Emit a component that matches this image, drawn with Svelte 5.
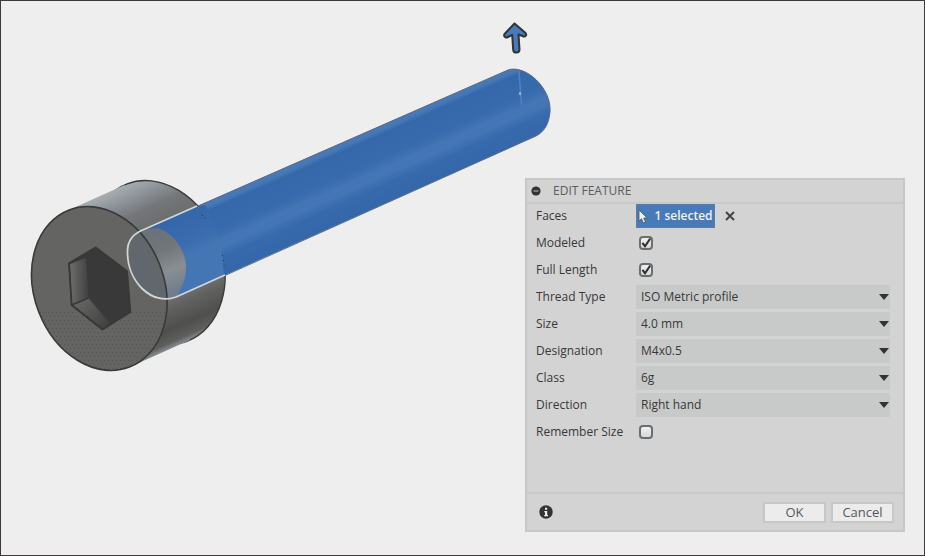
<script>
  let modeled = $state(true);
  let fullLength = $state(true);
  let rememberSize = $state(false);
  let facesSelected = $state(1);

  const selects = [
    { id: 'thread-type', label: 'Thread Type', options: ['ISO Metric profile'] },
    { id: 'size', label: 'Size', options: ['4.0 mm'] },
    { id: 'designation', label: 'Designation', options: ['M4x0.5'] },
    { id: 'class', label: 'Class', options: ['6g'] },
    { id: 'direction', label: 'Direction', options: ['Right hand'] }
  ];
</script>

{#snippet tick()}
  <svg class="tick" viewBox="0 0 14 14" aria-hidden="true">
    <path d="M3.4 6.8 6 10.2 11.2 2.6" fill="none" stroke="#303030" stroke-width="2" />
  </svg>
{/snippet}

<main class="viewport">
  <svg class="model" width="600" height="400" viewBox="0 0 600 400" role="img" aria-label="Socket head screw with one selected face">
    <defs>
      <linearGradient id="side" gradientUnits="userSpaceOnUse" x1="95" y1="198" x2="164" y2="351">
        <stop offset="0" stop-color="#a8adb2" />
        <stop offset=".1" stop-color="#8b9096" />
        <stop offset=".19" stop-color="#737577" />
        <stop offset=".32" stop-color="#6b6c6b" />
        <stop offset=".6" stop-color="#707274" />
        <stop offset=".7" stop-color="#74777a" />
        <stop offset=".78" stop-color="#626261" />
        <stop offset=".9" stop-color="#4f4f4e" />
        <stop offset=".97" stop-color="#5e5e5d" />
        <stop offset="1" stop-color="#85898d" />
      </linearGradient>
      <linearGradient id="shaft" gradientUnits="userSpaceOnUse" x1="145" y1="229" x2="175" y2="297">
        <stop offset="0" stop-color="#4a7ab6" />
        <stop offset=".07" stop-color="#4677b5" />
        <stop offset=".12" stop-color="#3568ab" />
        <stop offset=".42" stop-color="#386bad" />
        <stop offset=".55" stop-color="#4475b4" />
        <stop offset=".64" stop-color="#4475b4" />
        <stop offset=".76" stop-color="#376aad" />
        <stop offset="1" stop-color="#3467aa" />
      </linearGradient>
      <linearGradient id="root" gradientUnits="userSpaceOnUse" x1="180" y1="220" x2="206" y2="280">
        <stop offset="0" stop-color="#3568ab" />
        <stop offset=".35" stop-color="#3a6cae" />
        <stop offset=".55" stop-color="#4576b4" />
        <stop offset="1" stop-color="#4475b4" />
      </linearGradient>
      <linearGradient id="core" gradientUnits="userSpaceOnUse" x1="150" y1="225" x2="178" y2="290">
        <stop offset="0" stop-color="#69717a" />
        <stop offset=".4" stop-color="#72767a" />
        <stop offset=".7" stop-color="#898e93" />
        <stop offset="1" stop-color="#727d8a" />
      </linearGradient>
      <linearGradient id="wallLeft">
        <stop offset="0" stop-color="#6c6c6b" />
        <stop offset="1" stop-color="#414141" />
      </linearGradient>
      <linearGradient id="wallBottom" x1="0" y1="0" x2="1" y2=".6">
        <stop offset="0" stop-color="#6c6c6b" />
        <stop offset="1" stop-color="#444444" />
      </linearGradient>
      <pattern id="grain" width="4" height="4" patternUnits="userSpaceOnUse">
        <path d="M0 0h1v1H0zM2 2h1v1H2z" fill="#3f6fae" />
      </pattern>
      <pattern id="shade" width="4" height="8" patternUnits="userSpaceOnUse">
        <path d="M0 0h1v1H0zM2 4h1v1H2z" fill="#3b3b3b" />
      </pattern>
      <clipPath id="cap"><ellipse cx="99.3" cy="288.5" rx="84.2" ry="64.9" transform="rotate(69 99.3 288.5)" /></clipPath>
      <clipPath id="back"><ellipse cx="157.3" cy="262.5" rx="84.2" ry="64.9" transform="rotate(69 157.3 262.5)" /></clipPath>
      <clipPath id="rod"><path d="M145 229 508 70C525 64 552 88 550 112 549 124 544 132 536 136L176 297C152 306 127 282 127.500 251 127.500 240 134 233 145 229Z" /></clipPath>
    </defs>

    <path d="M80 170H240V350H80Z" fill="url(#side)" clip-path="url(#back)" />
    <ellipse cx="157.3" cy="262.5" rx="84.2" ry="64.9" transform="rotate(69 157.3 262.5)" fill="none" stroke="#393939" stroke-width="1.4" />
    <path d="M66.600 210.900 124.600 184.900 190 340 132 366.100Z" fill="url(#side)" />
    <ellipse cx="99.3" cy="288.5" rx="84.2" ry="64.9" transform="rotate(69 99.3 288.5)" fill="#646462" />
    <path d="M30 312H170V375H30Z" fill="url(#shade)" clip-path="url(#cap)" opacity=".4" />

    <g stroke="#383838" stroke-linejoin="round">
      <path d="M96 247.300 127.300 271 130.700 312.300 102.700 329.700 71.700 305 69 263.300Z" fill="#393939" stroke-width="1.2" />
      <path d="M70 264 86 258 88.500 298 71.700 305Z" fill="url(#wallLeft)" stroke="none" />
      <path d="M72 305 88.500 298 109.500 323 102.700 328.500Z" fill="url(#wallBottom)" stroke="none" />
      <path d="M96 247.300 69 263.300 71.700 305 102.700 329.700M71.700 305 88.500 298" fill="none" stroke-width="1.8" />
    </g>

    <g clip-path="url(#rod)">
      <path d="M120 40H560V310H120Z" fill="url(#shaft)" />
      <path d="M125 215 205 205C218 224 224 252 224 282L150 312Z" fill="url(#root)" />
      <path d="M120 231 158 228C177 235 186 253 186 268 186 280 181 289 175 300H120Z" fill="url(#core)" />
      <g clip-path="url(#cap)">
        <path d="M120 220H175V305H120Z" fill="#646668" />
        <path d="M120 220H175V305H120Z" fill="url(#grain)" opacity=".6" />
      </g>
    </g>
    <ellipse cx="99.3" cy="288.5" rx="84.2" ry="64.9" transform="rotate(69 99.3 288.5)" fill="none" stroke="#393939" stroke-width="1.6" />

    <path d="M197 206.500 508 70C525 64 552 88 550 112 549 124 544 132 536 136L225 275.500" fill="none" stroke="#596b83" stroke-width="1" />
    <path d="M197 206 145 229C134 233 127.500 240 127.500 251 127 282 152 306 176 297L225 275" fill="none" stroke="#d4d6d8" stroke-width="1.8" />
    <path d="M519 71 521.500 105" stroke="#5683bc" stroke-width="1.4" />
    <path d="M520 92v3" stroke="#d4d6d8" stroke-width="1.2" />
    <path d="M202 215l1 1M204.500 217.500l1 1M222.500 255v1M223.500 260v1M224 265v1" stroke="#333" stroke-width="1" />

    <path d="M514.500 23.500 525 32.500C527.500 35 525.500 37.500 522.500 36L518.500 34.500 519.500 49.500C519.500 53.500 513.500 53.500 513.200 49.800L512.200 34.800 508 37C505 38.500 503 35.500 505 33.500Z" fill="#467ab8" stroke="#333336" stroke-width="2" stroke-linejoin="round" />
  </svg>

  <form class="panel" onsubmit={(e) => e.preventDefault()}>
    <header>
      <button type="button" class="collapse" aria-label="Collapse">
        <svg viewBox="0 0 10 10" aria-hidden="true"><circle cx="5" cy="5" r="4.600" fill="#333" /><path d="M2.500 5h5" stroke="#aaa" stroke-width="1.200" /></svg>
      </button>
      <h1>EDIT FEATURE</h1>
    </header>

    <div class="fields">
      <div class="row">
        <label for="faces">Faces</label>
        <div class="selection">
          <button type="button" id="faces" class="faces">
            <svg viewBox="0 0 10 15" aria-hidden="true"><path d="M1 1V12L3.500 9.700 5.300 14 7.500 13 5.700 9H9.200Z" fill="#eee" stroke="#50555c" stroke-width=".8" /></svg>
            <span>{facesSelected} selected</span>
          </button>
          <button type="button" class="clear" aria-label="Clear selection" onclick={() => (facesSelected = 0)}>
            <svg viewBox="0 0 10 10" aria-hidden="true"><path d="M1 1 9 9M9 1 1 9" stroke="#444" stroke-width="2" /></svg>
          </button>
        </div>
      </div>
      <div class="row">
        <label for="modeled">Modeled</label>
        <span class="check"><input type="checkbox" id="modeled" bind:checked={modeled} />{#if modeled}{@render tick()}{/if}</span>
      </div>
      <div class="row">
        <label for="full-length">Full Length</label>
        <span class="check"><input type="checkbox" id="full-length" bind:checked={fullLength} />{#if fullLength}{@render tick()}{/if}</span>
      </div>
      {#each selects as field (field.id)}
        <div class="row">
          <label for={field.id}>{field.label}</label>
          <div class="dropdown">
            <select id={field.id}>
              {#each field.options as option}<option>{option}</option>{/each}
            </select>
            <svg viewBox="0 0 10 6" aria-hidden="true"><path d="M0 0H10L5 6Z" fill="#333" /></svg>
          </div>
        </div>
      {/each}
      <div class="row">
        <label for="remember">Remember Size</label>
        <span class="check"><input type="checkbox" id="remember" bind:checked={rememberSize} />{#if rememberSize}{@render tick()}{/if}</span>
      </div>
    </div>

    <footer>
      <button type="button" class="info" aria-label="Information">
        <svg viewBox="0 0 14 14" aria-hidden="true"><circle cx="7" cy="7" r="6.700" fill="#333" /><path d="M6 2.800h2.200v2H6zM5.300 6h2.900v4h.8v1.200H5.200V10H6V7.200h-.7z" fill="#eee" /></svg>
      </button>
      <button type="submit" class="action">OK</button>
      <button type="button" class="action">Cancel</button>
    </footer>
  </form>
</main>

<style>
  :global(body) {
    margin: 0;
  }

  .viewport {
    position: relative;
    box-sizing: border-box;
    min-height: 100vh;
    overflow: hidden;
    border: 1px solid #3b393a;
    background: #eeeeee;
    color: #383838;
    font-family: 'Open Sans', 'Noto Sans', sans-serif;
    font-size: 12px;
    line-height: 16px;
  }

  .model {
    position: absolute;
    top: -1px;
    left: -1px;
  }

  .panel {
    position: absolute;
    top: 177px;
    right: 19px;
    box-sizing: border-box;
    width: 380px;
    border: 2px solid #c6c8c8;
    background: #d3d3d3;
  }

  header {
    display: flex;
    align-items: center;
    gap: 12px;
    height: 22px;
    padding-left: 4px;
    border-bottom: 2px solid #c8caca;
  }

  h1 {
    margin: 0;
    color: #5a5c5e;
    font-size: 12px;
    font-weight: 400;
  }

  button {
    padding: 0;
    border: 0;
    background: none;
    color: inherit;
    font: inherit;
  }

  button svg {
    display: block;
  }

  .collapse svg {
    width: 10px;
    height: 10px;
  }

  .fields {
    display: flex;
    flex-direction: column;
    gap: 3px;
    min-height: 288px;
    padding: 0 13px 0 9px;
  }

  .row {
    display: grid;
    grid-template-columns: 100px 1fr;
    align-items: center;
    height: 24px;
  }

  label,
  select {
    font-weight: 500;
  }

  .selection {
    display: flex;
    align-items: center;
    gap: 10px;
  }

  .faces {
    display: flex;
    align-items: center;
    justify-content: center;
    gap: 6px;
    box-sizing: border-box;
    width: 79px;
    height: 24px;
    border: 1px solid #5c7da8;
    background: #467ab8;
    color: #f0f0f0;
    font-weight: 600;
  }

  .faces svg {
    width: 10px;
    height: 15px;
  }

  .clear svg {
    width: 10px;
    height: 10px;
  }

  .check {
    display: grid;
    width: 14px;
    height: 14px;
    margin-left: 3px;
  }

  .check > :global(*) {
    grid-area: 1 / 1;
  }

  input {
    box-sizing: border-box;
    width: 14px;
    height: 14px;
    margin: 0;
    border: 2px solid #6b6e71;
    border-radius: 4px;
    appearance: none;
    background: linear-gradient(#f0f0f0, #d8d8d8);
  }

  .tick {
    width: 14px;
    height: 14px;
    pointer-events: none;
  }

  .dropdown {
    display: grid;
    align-items: center;
  }

  .dropdown > * {
    grid-area: 1 / 1;
  }

  select {
    width: 100%;
    height: 24px;
    padding: 0 20px 2px 5px;
    border: 0;
    border-radius: 0;
    appearance: none;
    background: #c8caca;
    color: inherit;
    font-family: inherit;
    font-size: 12px;
  }

  .dropdown svg {
    justify-self: end;
    width: 10px;
    height: 6px;
    margin-right: 1px;
    pointer-events: none;
  }

  footer {
    display: flex;
    align-items: center;
    gap: 5px;
    height: 36px;
    padding: 0 9px 0 12px;
    border-top: 2px solid #c8caca;
  }

  .info {
    margin-right: auto;
  }

  .info svg {
    width: 14px;
    height: 14px;
  }

  .action {
    box-sizing: border-box;
    width: 63px;
    height: 21px;
    border: 2px solid #c6c8c8;
    background: #ececec;
    color: #55585b;
    font-size: 13px;
  }
</style>
